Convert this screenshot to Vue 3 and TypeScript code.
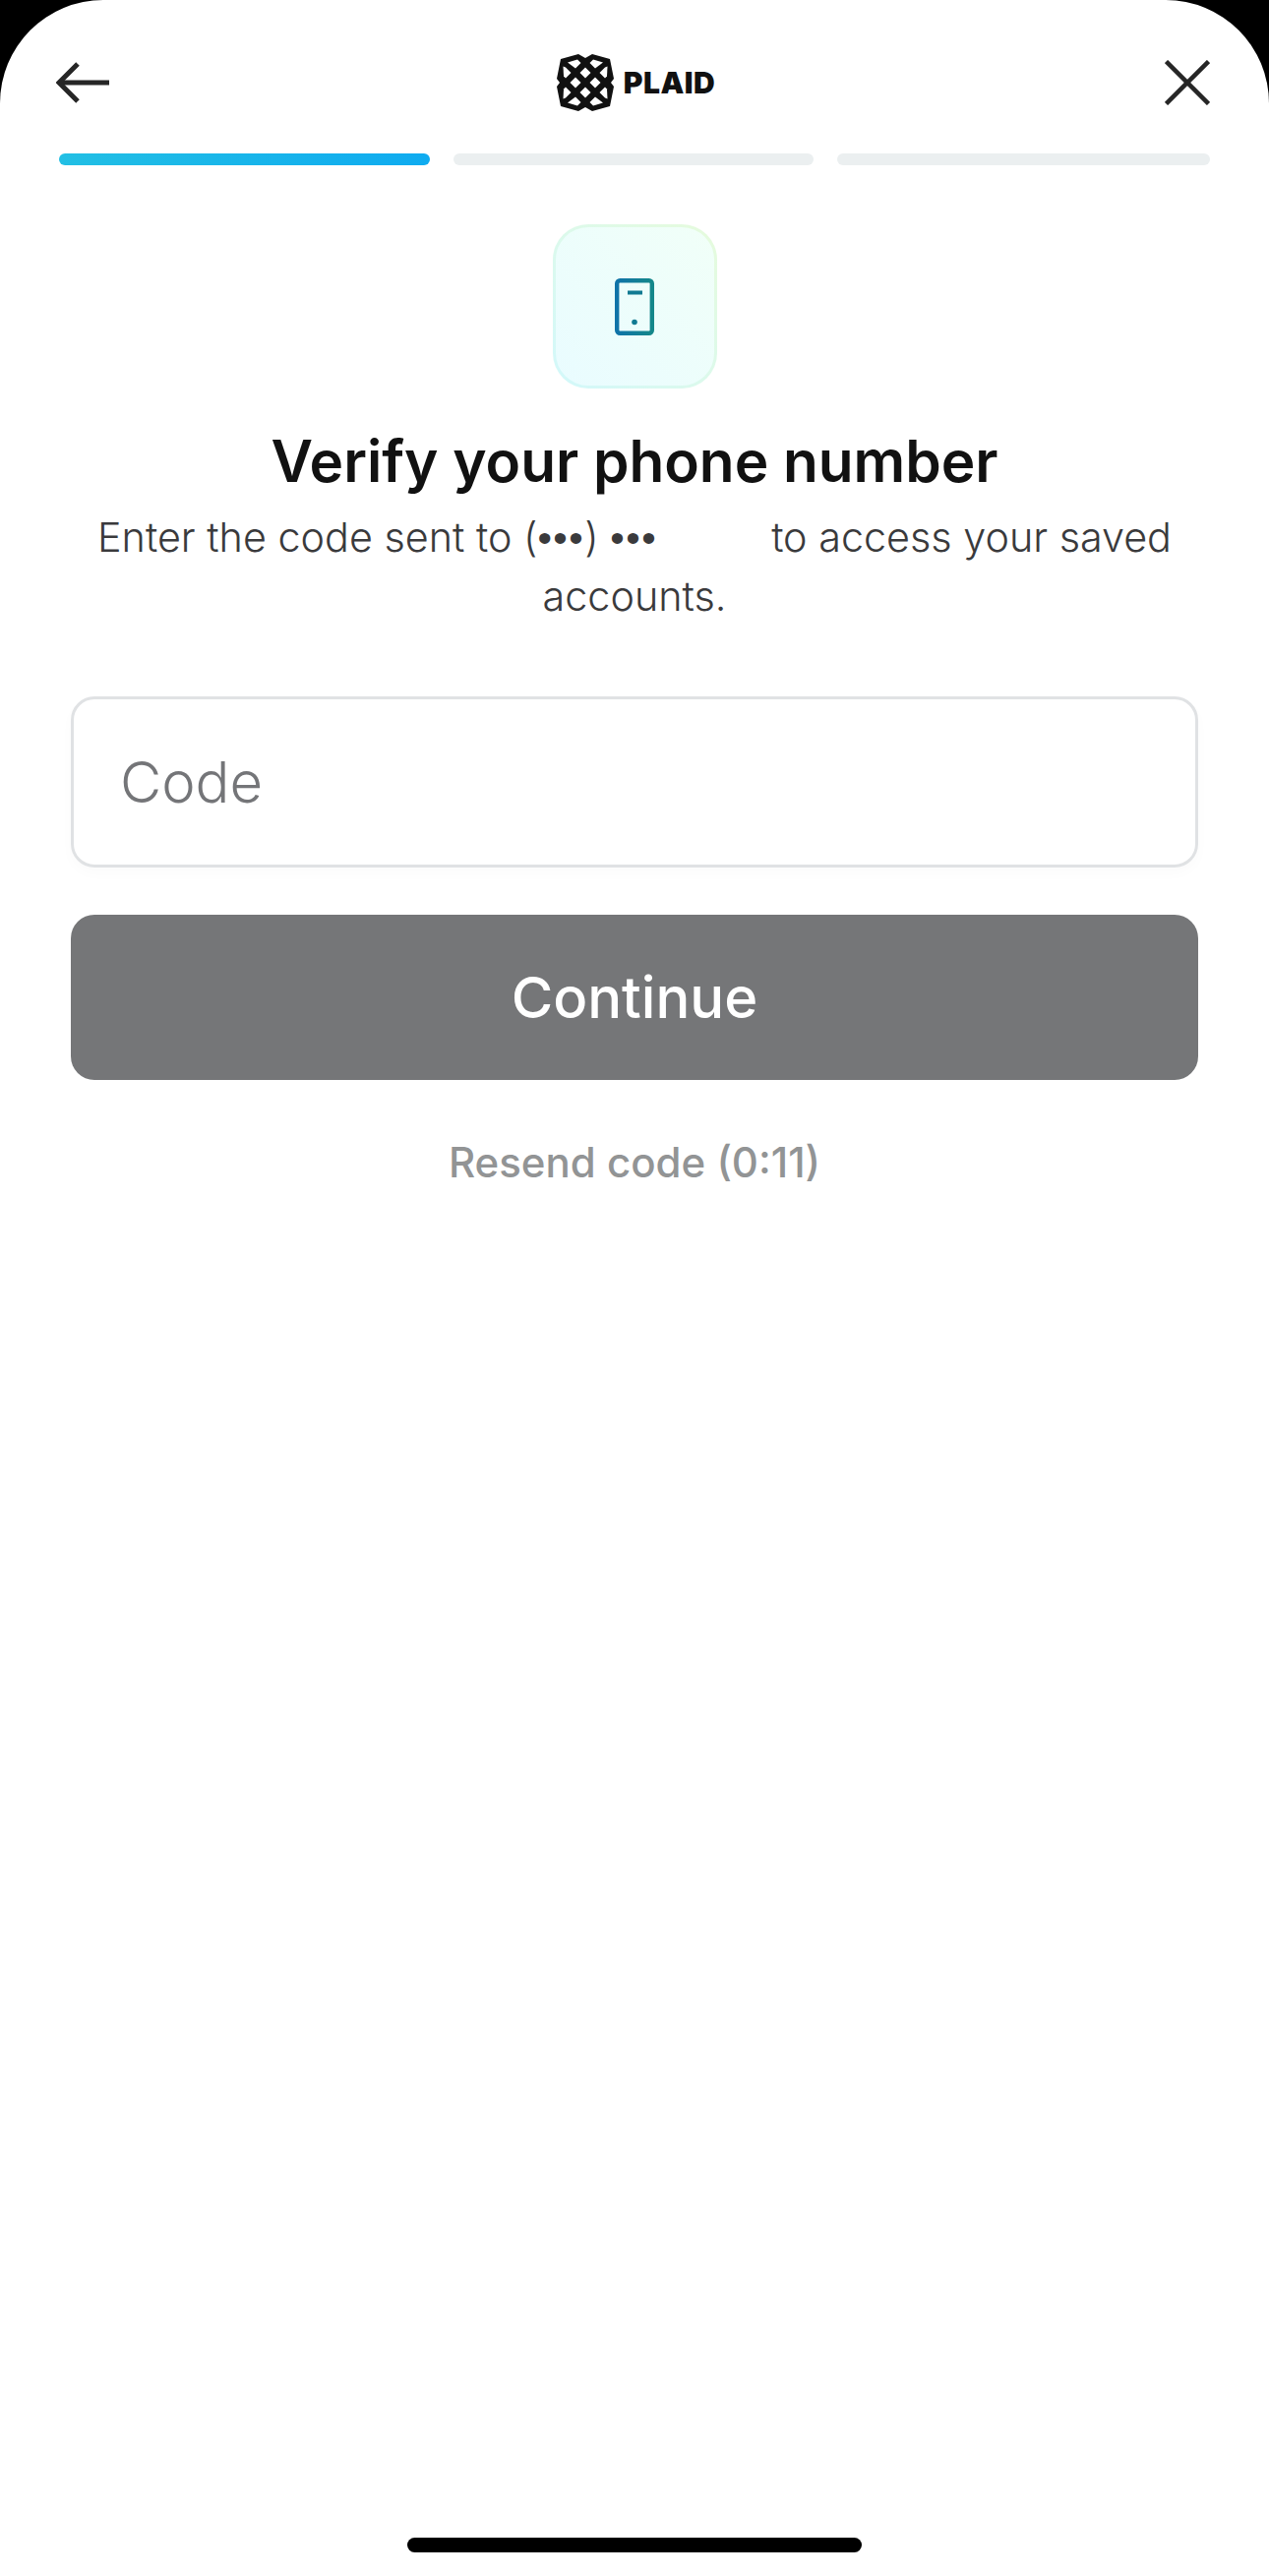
<template>
  <div class="screen">
    <header class="top-bar">
      <button class="icon-button back">
        <svg viewBox="0 0 54 42" fill="none" stroke="#262626" stroke-width="5">
          <path d="M54 21H3"></path>
          <path d="M22 2L3 21l19 19"></path>
        </svg>
      </button>
      <div class="brand">
        <svg class="brand-mark" viewBox="0 0 60 60">
          <path fill="#111" d="M5 6L23 1 30 5 37 1 55 6 59 26 56 30 59 34 55 54 37 59 30 55 23 59 5 54 1 34 4 30 1 26z"></path>
          <path v-for="d in holes" :key="d" fill="#fff" :d="d"></path>
        </svg>
        <span class="brand-name">PLAID</span>
      </div>
      <button class="icon-button close">
        <svg viewBox="0 0 46 46" fill="none" stroke="#262626" stroke-width="4.5">
          <path d="M1.5 1.5l43 43"></path>
          <path d="M44.5 1.5l-43 43"></path>
        </svg>
      </button>
    </header>

    <div class="progress">
      <span v-for="step in steps" :key="step.id" :class="['progress-step', { active: step.active }]"></span>
    </div>

    <main class="content">
      <div class="tile">
        <svg viewBox="0 0 40 58" fill="none">
          <defs>
            <linearGradient id="phone-stroke" x1="0" y1="0" x2="1" y2="0">
              <stop offset="0" stop-color="#0f73a8"></stop>
              <stop offset="1" stop-color="#14878a"></stop>
            </linearGradient>
          </defs>
          <rect x="2.2" y="2.2" width="35.6" height="53.6" rx="3" stroke="url(#phone-stroke)" stroke-width="4.4"></rect>
          <rect x="13" y="12.500" width="15" height="4" fill="#117a92"></rect>
          <circle cx="20" cy="44.500" r="2.800" fill="#117a92"></circle>
        </svg>
      </div>

      <h1 class="title">Verify your phone number</h1>
      <p class="subtitle">Enter the code sent to (<span class="dots">•••</span>) <span class="dots">•••</span><span class="redacted"></span>to access your saved<br>accounts.</p>

      <div class="code-input">Code</div>
      <button class="continue">Continue</button>
      <div class="resend">Resend code (0:11)</div>
    </main>

    <div class="home-indicator"></div>
  </div>
</template>

<script setup lang="ts">
const steps = [
  { id: 1, active: true },
  { id: 2, active: false },
  { id: 3, active: false },
]

// the white gaps in the Plaid lattice, in the 60x60 logo box
const holes = [
  'M30 14.500L35.500 20 30 25.500 24.500 20z',
  'M20 24.500L25.500 30 20 35.500 14.500 30z',
  'M40 24.500L45.500 30 40 35.500 34.500 30z',
  'M30 34.500L35.500 40 30 45.500 24.500 40z',
  'M12 9.500L22 6.500 25.500 10 20 15.500z',
  'M48 9.500L38 6.500 34.500 10 40 15.500z',
  'M7.500 13.500L10 14.500 15.500 20 10 25.500 8 23.500z',
  'M52.500 13.500L50 14.500 44.500 20 50 25.500 52 23.500z',
  'M8 36.500L10 34.500 15.500 40 10 45.500 7.500 46.500z',
  'M52 36.500L50 34.500 44.500 40 50 45.500 52.500 46.500z',
  'M12 50.500L22 53.500 25.500 50 20 44.500z',
  'M48 50.500L38 53.500 34.500 50 40 44.500z',
]
</script>

<style>
html,
body {
  background: #000;
}
</style>

<style scoped>
.screen {
  width: 1290px;
  height: 2619px;
  background: #fff;
  border-radius: 105px 105px 0 0;
  display: flex;
  flex-direction: column;
  overflow: hidden;
  font-family: Inter, "Liberation Sans", sans-serif;
}

.top-bar {
  display: flex;
  align-items: center;
  justify-content: space-between;
  height: 156px;
  padding: 12px 60px 0 57px;
  box-sizing: border-box;
  flex-shrink: 0;
}

.icon-button {
  padding: 0;
  border: none;
  background: none;
  display: flex;
}

.back svg {
  width: 54px;
  height: 42px;
}

.close svg {
  width: 46px;
  height: 46px;
}

.brand {
  display: flex;
  align-items: center;
  gap: 9px;
  margin-left: -3px;
}

.brand-mark {
  width: 60px;
  height: 60px;
}

.brand-name {
  font-size: 30px;
  font-weight: 900;
  letter-spacing: 0.5px;
  color: #111;
  line-height: 1;
}

.progress {
  display: grid;
  grid-template-columns: 377px 366px 379px;
  gap: 24px;
  padding-left: 60px;
}

.progress-step {
  height: 12px;
  border-radius: 6px;
  background: #ebeff0;
}

.progress-step.active {
  background: linear-gradient(90deg, #22bfe4, #0fabf0);
}

.content {
  display: flex;
  flex-direction: column;
  align-items: center;
  padding: 60px 72px 0;
  flex: 1;
}

.tile {
  width: 167px;
  height: 167px;
  box-sizing: border-box;
  border: 3px solid transparent;
  border-radius: 36px;
  background:
    linear-gradient(45deg, #e9fcff, #f1fff8) padding-box,
    linear-gradient(45deg, #d2f8fb, #e6fbdc) border-box;
  display: flex;
  align-items: center;
  justify-content: center;
}

.tile svg {
  width: 40px;
  height: 58px;
}

.title {
  margin: 38px 0 0;
  font-size: 58.5px;
  line-height: 72px;
  font-weight: 600;
  color: #111;
  white-space: nowrap;
}

.subtitle {
  margin: 12px 0 0;
  font-size: 41.3px;
  line-height: 59px;
  font-weight: 300;
  color: #3a3a3c;
  text-align: center;
  white-space: nowrap;
}

.dots {
  font-family: "Liberation Sans", sans-serif;
  font-weight: 400;
  letter-spacing: 1.5px;
}

.redacted {
  display: inline-block;
  width: 116px;
}

.code-input {
  width: 100%;
  height: 174px;
  margin-top: 72px;
  box-sizing: border-box;
  border: 3px solid #e0e2e4;
  border-radius: 24px;
  padding-left: 47px;
  display: flex;
  align-items: center;
  font-size: 58px;
  font-weight: 300;
  color: #747578;
  box-shadow: 0 6px 14px rgba(0, 0, 0, 0.02);
}

.continue {
  width: 100%;
  height: 168px;
  margin-top: 48px;
  border: none;
  border-radius: 24px;
  background: #757678;
  color: #fff;
  font-family: inherit;
  font-size: 58px;
  font-weight: 500;
}

.resend {
  margin-top: 59px;
  font-size: 42px;
  line-height: 50px;
  font-weight: 500;
  color: #929495;
}

.home-indicator {
  align-self: center;
  width: 462px;
  height: 15px;
  border-radius: 8px;
  background: #000;
  margin-bottom: 24px;
  flex-shrink: 0;
}
</style>
